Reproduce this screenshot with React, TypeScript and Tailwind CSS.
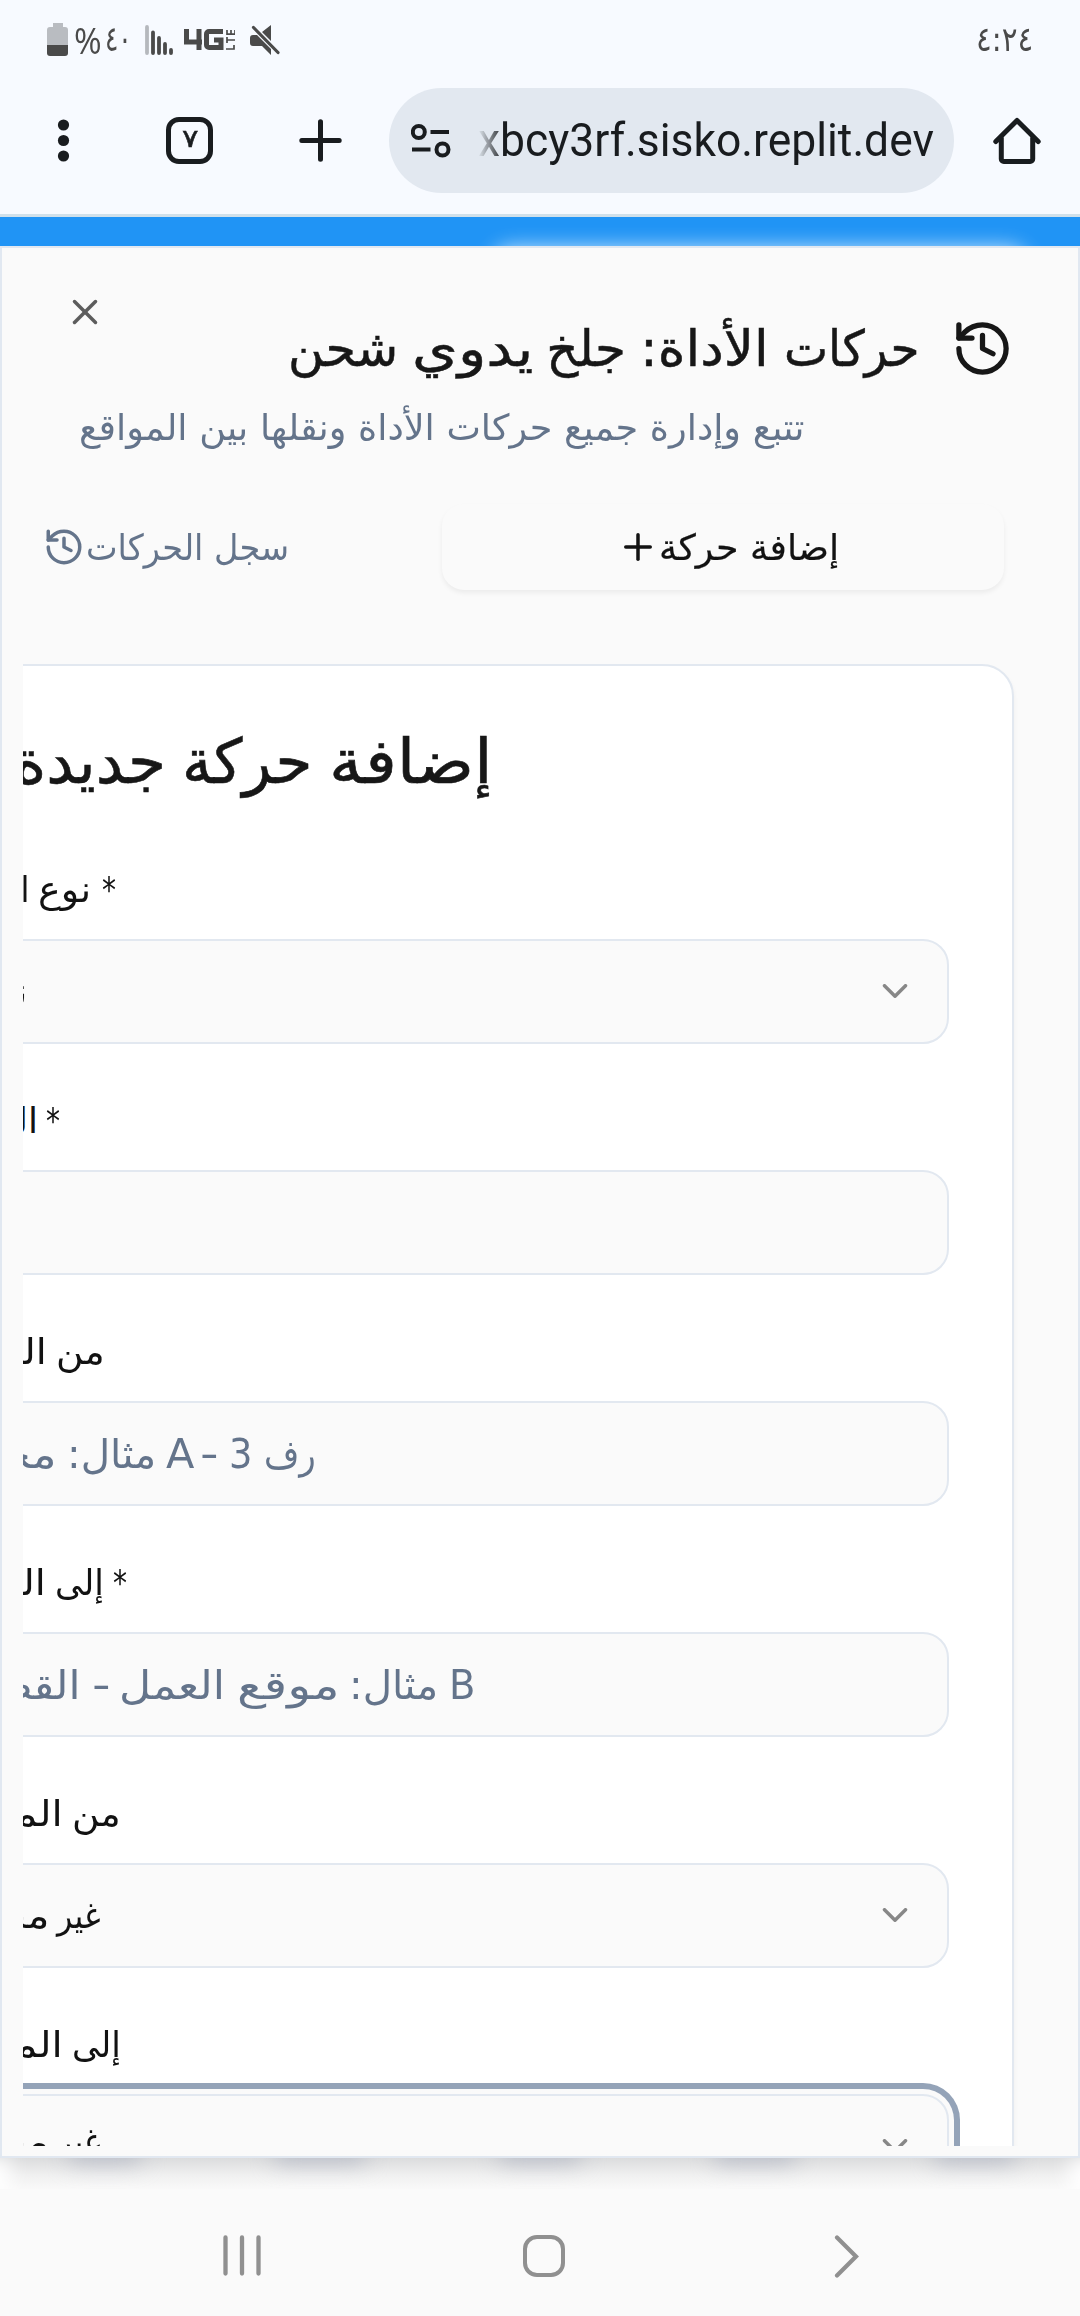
import React, { useLayoutEffect, useRef, useState } from "react";
import { ChevronDown, History, Plus, X } from "lucide-react";

type Word = { t: string; w?: number; s?: number; gap?: number; dir?: "ltr" | "rtl" };

/** One run of text, condensed or widened to the given width. */
function Fit({ t, w, s = 1, gap = 0, dir = "rtl" }: Word) {
  const ref = useRef<HTMLSpanElement>(null);
  const [scale, setScale] = useState(s);
  useLayoutEffect(() => {
    if (w && ref.current) setScale(w / ref.current.offsetWidth);
  }, [w, t]);
  return (
    <span
      dir={dir}
      className="flex shrink-0 justify-start whitespace-nowrap"
      style={{ width: w, marginInlineEnd: gap }}
    >
      <span
        ref={ref}
        className={dir === "rtl" ? "block shrink-0 origin-right" : "block shrink-0 origin-left"}
        style={{ transform: `scaleX(${scale})` }}
      >
        {t}
      </span>
    </span>
  );
}

function Line({ words, className }: { words: Word[]; className: string }) {
  return (
    <div dir="rtl" className={`flex ${className}`}>
      {words.map((x, i) => (
        <Fit key={i} {...x} />
      ))}
    </div>
  );
}

type FieldData = {
  label: Word[];
  labelPad: string;
  value?: Word[];
  valuePad?: string;
  valueStyle?: string;
  select?: boolean;
  focused?: boolean;
};

const PLACEHOLDER = "text-[40px] text-[#64748b]";
const VALUE = "text-[36px] text-[#121212]";

const fields: FieldData[] = [
  {
    label: [{ t: "*", w: 14, gap: 11 }, { t: "نوع", w: 53, gap: 8 }, { t: "الحركة", s: 0.9 }],
    labelPad: "pr-[835px]",
    value: [{ t: "نوع الحركة", s: 0.9 }],
    valuePad: "pr-[920px]",
    valueStyle: "text-[38px] text-[#171717]",
    select: true,
  },
  {
    label: [{ t: "*", w: 14, gap: 8 }, { t: "الكمية", s: 1 }],
    labelPad: "pr-[891px]",
  },
  {
    label: [{ t: "من", w: 49, gap: 9 }, { t: "الموقع", s: 1.1 }],
    labelPad: "pr-[846px]",
    value: [
      { t: "رف", w: 52, gap: 12 },
      { t: "3", w: 23, gap: 11 },
      { t: "-", w: 18, gap: 6 },
      { t: "A", w: 28, gap: 10 },
      { t: "مثال:", w: 89, gap: 10 },
      { t: "مخزن", s: 1.15 },
    ],
    valuePad: "pr-[631px]",
    valueStyle: PLACEHOLDER,
  },
  {
    label: [{ t: "*", w: 14, gap: 9 }, { t: "إلى", w: 49, gap: 9 }, { t: "الموقع", s: 1.1 }],
    labelPad: "pr-[824px]",
    value: [
      { t: "B", w: 26, gap: 11 },
      { t: "مثال:", w: 89, gap: 10 },
      { t: "موقع", w: 103, gap: 11 },
      { t: "العمل", w: 106, gap: 9 },
      { t: "-", w: 18, gap: 12 },
      { t: "القطاع", s: 1.08 },
    ],
    valuePad: "pr-[472px]",
    valueStyle: PLACEHOLDER,
  },
  {
    label: [{ t: "من", w: 49, gap: 9 }, { t: "المشروع", s: 1.12 }],
    labelPad: "pr-[830px]",
    value: [{ t: "غير", w: 44, gap: 8 }, { t: "محدد", s: 1.15 }],
    valuePad: "pr-[846px]",
    valueStyle: VALUE,
    select: true,
  },
  {
    label: [{ t: "إلى", w: 49, gap: 9 }, { t: "المشروع", s: 1.12 }],
    labelPad: "pr-[830px]",
    value: [{ t: "غير", w: 44, gap: 8 }, { t: "محدد", s: 1.15 }],
    valuePad: "pr-[846px] pb-[10px]",
    valueStyle: VALUE,
    select: true,
    focused: true,
  },
];

function Field({ f }: { f: FieldData }) {
  return (
    <div className="h-[231px]">
      <Line
        words={f.label}
        className={`h-[126px] pt-[46px] text-[36px] leading-[62px] text-[#121212] ${f.labelPad}`}
      />
      <div
        className={`relative flex h-[105px] w-[1000px] items-center rounded-[26px] border-2 border-[#e2e8f0] bg-[#fafafa] ${
          f.focused ? "shadow-[0_0_0_5px_#fafafa,0_0_0_11px_#94a3b8]" : ""
        }`}
      >
        {f.value && (
          <Line words={f.value} className={`w-full leading-[80px] ${f.valuePad} ${f.valueStyle}`} />
        )}
        {f.select && (
          <ChevronDown size={42} strokeWidth={2} className="absolute right-[31px] top-[29px] text-[#171717] opacity-50" />
        )}
      </div>
    </div>
  );
}

function StatusBar() {
  return (
    <div className="flex h-[80px] items-start pl-[47px] pr-[47px] pt-[23px] text-[#4a4a4a]">
      <svg width="22" height="34" viewBox="0 0 22 34">
        <path d="M6 0h10v4h2a3 3 0 0 1 3 3v15H0V7a3 3 0 0 1 3-3h3z" fill="#b9bcc1" />
        <path d="M0 22h21v8a3 3 0 0 1-3 3H3a3 3 0 0 1-3-3z" fill="#4a4a4a" />
      </svg>
      <div className="ml-[5px] flex h-[34px] items-start leading-[34px]">
        <div className="font-['Open_Sans'] text-[37px]">
          <Fit t="%" w={28} dir="ltr" />
        </div>
        <div className="-mt-px ml-[3px] text-[35px]">
          <Fit t="٤٠" w={27} dir="ltr" />
        </div>
      </div>
      <svg className="ml-[13px] mt-[2px]" width="30" height="30" viewBox="0 0 30 30" strokeWidth="3.8" strokeLinecap="round">
        <path d="M2 2v26" stroke="#b5b8bd" />
        <path d="M8 7.500v20.500M14 13v15M20 19v9M26 25v3" stroke="#4a4a4a" />
      </svg>
      <div className="ml-[9px] mt-[5px] flex h-[22px] items-center">
        <svg width="41" height="21" viewBox="0 0 41 21" fill="none" stroke="#4a4a4a" strokeWidth="5">
          <path d="M2.500 0v13H18M15 0v21" />
          <path d="M39 2.500H25a2.500 2.500 0 0 0-2.500 2.500v11a2.500 2.500 0 0 0 2.500 2.500h12V11h-7" />
        </svg>
        <svg className="ml-[1px]" width="9" height="21" viewBox="0 0 9 21" fill="none" stroke="#4a4a4a" strokeWidth="1.700">
          <path d="M0 20h8v-4M1 14V8M1 11h8M1 6V1M1 5.200h8V1M5 5V1" />
        </svg>
      </div>
      <svg className="ml-[15px] mt-px" width="31" height="32" viewBox="0 0 31 32" fill="#4a4a4a">
        <path d="M12 8 21 1v16zM3 11h4l14 14v6l-9-9H3a3 3 0 0 1-3-3v-5a3 3 0 0 1 3-3z" />
        <path d="M3.500 3.500 28 28.500" stroke="#4a4a4a" strokeWidth="3.200" strokeLinecap="round" />
      </svg>
      <div className="-mt-px ml-auto text-[34px] leading-[34px]">
        <Fit t="٤:٢٤" w={57} dir="ltr" />
      </div>
    </div>
  );
}

function BrowserBar() {
  return (
    <div className="flex h-[134px] items-start pt-[8px]">
      <svg className="ml-[57px] mt-[30px]" width="13" height="45" viewBox="0 0 13 45" fill="#191c1f">
        <circle cx="6.500" cy="7" r="5.600" />
        <circle cx="6.500" cy="22.500" r="5.600" />
        <circle cx="6.500" cy="38" r="5.600" />
      </svg>
      <div className="ml-[96px] mt-[29px] flex h-[47px] w-[47px] items-center justify-center rounded-[13px] border-[5px] border-[#191c1f] pb-[4px] text-[25px] leading-none text-[#191c1f] [-webkit-text-stroke:0.5px_#191c1f]">
        <Fit t="٧" w={16} dir="ltr" />
      </div>
      <svg className="ml-[86px] mt-[31px]" width="43" height="43" viewBox="0 0 43 43" stroke="#191c1f" strokeWidth="5" strokeLinecap="round">
        <path d="M21.500 2.800v37.400M2.800 21.500h37.400" />
      </svg>
      <div className="ml-[47px] flex h-[105px] w-[565px] items-start rounded-[53px] bg-[#e2e8f0] pl-[22px]">
        <svg className="mt-[36px]" width="40" height="34" viewBox="0 0 40 34" fill="none" stroke="#191c1f" strokeWidth="4">
          <circle cx="7.800" cy="8" r="6" />
          <circle cx="31.500" cy="25.500" r="6" />
          <path d="M19.500 8H38M1 25.500h18.500" />
        </svg>
        <div className="ml-[27px] mt-[20px] font-[Roboto] text-[46px] leading-[64px] text-[#191c1f] [mask-image:linear-gradient(to_right,transparent_0px,black_26px)]">
          <Fit t="xbcy3rf.sisko.replit.dev" w={456} dir="ltr" />
        </div>
      </div>
      <svg className="ml-[39px] mt-[29px]" width="48" height="48" viewBox="0 0 48 48" fill="none" stroke="#191c1f" strokeWidth="5" strokeLinejoin="round" strokeLinecap="round">
        <path d="M2.800 24.500 24 3.500l21.200 21M8.300 21v21a2.500 2.500 0 0 0 2.500 2.500h26.400a2.500 2.500 0 0 0 2.500-2.500V21" />
      </svg>
    </div>
  );
}

export default function App() {
  return (
    <div dir="ltr" className="flex h-[2316px] w-[1080px] flex-col overflow-hidden bg-[#f7faff] font-['DejaVu_Sans',sans-serif]">
      <StatusBar />
      <BrowserBar />
      <div className="h-[3px] bg-[#d0e0ea]" />
      <div className="relative h-[29px] overflow-hidden bg-[#2094f5]">
        <div className="absolute left-[498px] top-[36px] h-[40px] w-[524px] rounded-[14px] shadow-[0_0_20px_6px_rgba(255,255,255,0.75)]" />
      </div>
      <main className="relative z-10 flex h-[1912px] flex-col border-2 border-[#e1e8f1] bg-[#fafafa]">
        <header className="flex h-[210px] flex-col">
          <div className="flex h-[136px]">
            <X size={42} strokeWidth={2} className="ml-[62px] mt-[43px] shrink-0 text-[#5c5c5c]" />
            <div className="flex flex-1 justify-end">
              <div className="mt-[61px] text-[50px] leading-[80px] text-[#171717] [-webkit-text-stroke:0.5px_#171717]">
                <Line
                  words={[
                    { t: "حركات", w: 136, gap: 15 },
                    { t: "الأداة:", w: 129, gap: 14 },
                    { t: "جلخ", w: 80, gap: 13 },
                    { t: "يدوي", w: 121, gap: 14 },
                    { t: "شحن", w: 110 },
                  ]}
                  className=""
                />
              </div>
              <History size={63} strokeWidth={2} className="ml-[31px] mr-[64px] mt-[69px] text-[#171717]" />
            </div>
          </div>
          <Line
            words={[{ t: "تتبع وإدارة جميع حركات الأداة ونقلها بين المواقع", w: 725 }]}
            className="h-[60px] pr-[274px] text-[36px] leading-[87px] text-[#64748b]"
          />
        </header>
        <nav className="mt-[46px] flex h-[86px] items-center justify-end text-[36px] text-[#64748b]">
          <div className="flex items-center">
            <History size={42} strokeWidth={2} className="mr-px" />
            <div className="pt-[2px] leading-[70px]">
              <Line words={[{ t: "سجل الحركات", w: 203 }]} className="" />
            </div>
          </div>
          <div className="ml-[153px] mr-[74px] flex h-[86px] w-[562px] items-center rounded-[22px] bg-[#fafafa] pl-[175px] text-[#121212] shadow-[0_3px_5px_rgba(0,0,0,0.06)]">
            <Plus size={42} strokeWidth={2} />
            <div className="pt-[2px] leading-[70px] [-webkit-text-stroke:0.2px_currentColor]">
              <Line words={[{ t: "إضافة حركة", w: 180 }]} className="" />
            </div>
          </div>
        </nav>
        <div className="ml-[21px] mt-[74px] h-[1482px] overflow-hidden">
          <section className="-ml-[60px] flex h-[1700px] w-[1051px] flex-col rounded-t-[32px] border-2 border-[#e2e8f0] bg-white shadow-[0_3px_5px_rgba(0,0,0,0.05)]">
            <Line
              words={[
                { t: "إضافة", w: 164, gap: 17 },
                { t: "حركة", w: 130, gap: 16 },
                { t: "جديدة", w: 152 },
              ]}
              className="h-[147px] pr-[519px] pt-[48px] text-[62px] leading-[96px] text-[#171717] [-webkit-text-stroke:0.6px_#171717]"
            />
            <div className="ml-[-16px] w-[1002px]">
              {fields.map((f, i) => (
                <Field key={i} f={f} />
              ))}
            </div>
          </section>
        </div>
      </main>
      <div className="relative h-[31px] overflow-hidden bg-[linear-gradient(to_bottom,#dbdcdd,#f0f0f0_55%,#f9f9f9)]">
        <div className="absolute -top-[26px] left-[70px] h-[30px] w-[70px] bg-[#b9bdc8] blur-[11px]" />
        <div className="absolute -top-[26px] left-[275px] h-[30px] w-[90px] bg-[#b9bdc8] blur-[11px]" />
        <div className="absolute -top-[26px] left-[500px] h-[30px] w-[80px] bg-[#b9bdc8] blur-[11px]" />
        <div className="absolute -top-[26px] left-[715px] h-[30px] w-[80px] bg-[#b9bdc8] blur-[11px]" />
        <div className="absolute -top-[26px] left-[935px] h-[30px] w-[80px] bg-[#b9bdc8] blur-[11px]" />
        <div className="absolute -left-[30px] top-0 h-[40px] w-[40px] bg-white blur-[10px]" />
        <div className="absolute -right-[30px] top-0 h-[40px] w-[40px] bg-white blur-[10px]" />
      </div>
      <footer className="flex flex-1 items-start bg-[#fafafa] pl-[223px] pt-[46px]">
        <svg width="38" height="41" viewBox="0 0 38 41" stroke="#909090" strokeWidth="4.300" strokeLinecap="round">
          <path d="M2.500 2.500v36M19 2.500v36M35.500 2.500v36" />
        </svg>
        <div className="ml-[262px] h-[42px] w-[42px] rounded-[14px] border-[4px] border-[#909090]" />
        <svg className="ml-[269px]" width="26" height="43" viewBox="0 0 26 43" fill="none" stroke="#909090" strokeWidth="4.200" strokeLinecap="round" strokeLinejoin="miter">
          <path d="M3 2.500 22 21.500 3 40.500" />
        </svg>
      </footer>
    </div>
  );
}
